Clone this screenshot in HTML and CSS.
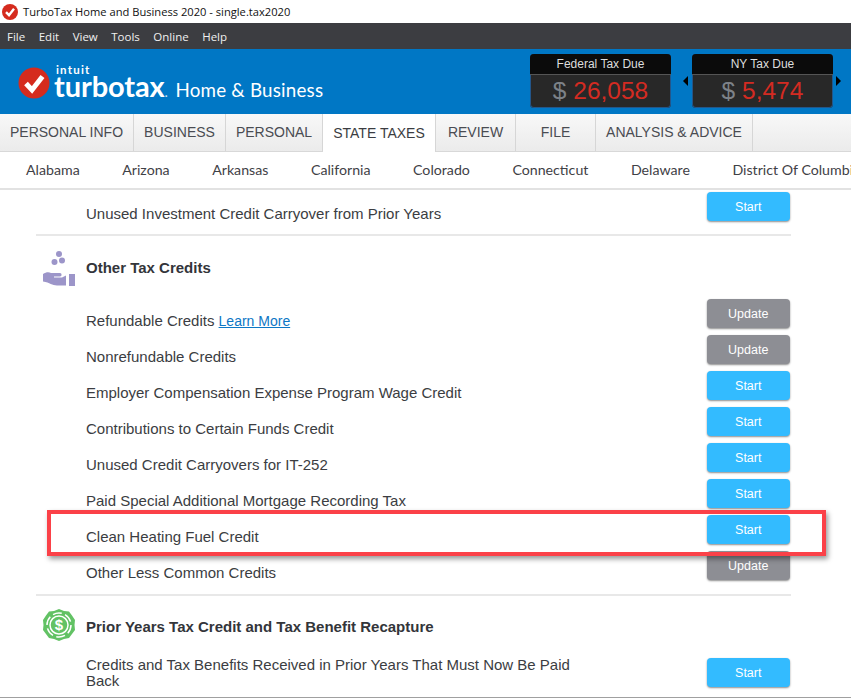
FILE: index.html
```html
<!DOCTYPE html>
<html lang="en">
<head>
<meta charset="utf-8">
<title>TurboTax Home and Business 2020</title>
<link rel="stylesheet" href="styles.css">
</head>
<body>
<div class="titlebar">
  <svg class="app-icon" width="16" height="16" viewBox="0 0 16 16"><circle cx="8" cy="8" r="8" fill="#d52b1e"/><path d="M4 8.200 7 11.200 12 4.800" fill="none" stroke="#fff" stroke-width="2.400"/></svg>
  <span>TurboTax Home and Business 2020 - single.tax2020</span>
</div>
<nav class="menubar"><span>File</span><span>Edit</span><span>View</span><span>Tools</span><span>Online</span><span>Help</span></nav>
<header class="brand">
  <svg class="logo-check" width="32" height="32" viewBox="0 0 32 32"><circle cx="16" cy="16" r="15.500" fill="#d52b1e"/><path d="M8 16.500 14 23 24.500 9.500" fill="none" stroke="#fff" stroke-width="5"/></svg>
  <div class="logo-text">
    <span class="intuit">intuit</span>
    <span class="wordmark"><b>turbotax</b><i>.</i><em>Home &amp; Business</em></span>
  </div>
  <div class="dues">
    <div class="due">
      <div class="due-head">Federal Tax Due</div>
      <div class="due-val"><span class="cur">$</span> <span class="amt">26,058</span></div>
    </div>
    <span class="arrow arrow-l"></span>
    <div class="due">
      <div class="due-head">NY Tax Due</div>
      <div class="due-val"><span class="cur">$</span> <span class="amt">5,474</span></div>
    </div>
    <span class="arrow arrow-r"></span>
  </div>
</header>
<div class="tabs">
  <div class="tab t1">PERSONAL INFO</div>
  <div class="tab t2">BUSINESS</div>
  <div class="tab t3">PERSONAL</div>
  <div class="tab t4 active">STATE TAXES</div>
  <div class="tab t5">REVIEW</div>
  <div class="tab t6">FILE</div>
  <div class="tab t7">ANALYSIS &amp; ADVICE</div>
</div>
<div class="states">
  <span>Alabama</span><span>Arizona</span><span>Arkansas</span><span>California</span><span>Colorado</span><span>Connecticut</span><span>Delaware</span><span>District Of Columbia</span>
</div>
<main class="content">
  <div class="row first"><div class="label">Unused Investment Credit Carryover from Prior Years</div><button class="btn start">Start</button></div>
  <hr class="rule rule-a">
  <div class="sec-head">
    <svg class="sec-icon" width="34" height="36" viewBox="0 0 34 36"><g fill="#9c95c9"><circle cx="17" cy="4" r="3"/><circle cx="12.500" cy="12" r="3"/><circle cx="20" cy="10.500" r="3"/><path d="M1 24c3-2 6-2 8-1h9c2 0 2 3.500 0 3.500h-6v1h8l4-2v10h-9c-5 0-7-3-14-4z"/><rect x="27" y="24" width="6" height="12"/></g></svg>
    <h2>Other Tax Credits</h2>
  </div>
  <div class="row"><div class="label">Refundable Credits <a href="#">Learn More</a></div><button class="btn update">Update</button></div>
  <div class="row"><div class="label">Nonrefundable Credits</div><button class="btn update">Update</button></div>
  <div class="row"><div class="label">Employer Compensation Expense Program Wage Credit</div><button class="btn start">Start</button></div>
  <div class="row"><div class="label">Contributions to Certain Funds Credit</div><button class="btn start">Start</button></div>
  <div class="row"><div class="label">Unused Credit Carryovers for IT-252</div><button class="btn start">Start</button></div>
  <div class="row"><div class="label">Paid Special Additional Mortgage Recording Tax</div><button class="btn start">Start</button></div>
  <div class="row"><div class="label">Clean Heating Fuel Credit</div><button class="btn start">Start</button></div>
  <div class="row"><div class="label">Other Less Common Credits</div><button class="btn update">Update</button></div>
  <hr class="rule rule-b">
  <div class="sec-head sec-two">
    <svg class="sec-icon" width="34" height="34" viewBox="0 0 34 34"><path fill="#62c264" d="M17 1l5 2 5 .500 3 4 3 4.500-.500 5 .500 5-3 4-3 4-5 1-5 2-5-2-5-1-3-4-3-4 .500-5-.500-5 3-4.500 3-4 5-.500z"/><circle cx="17" cy="17" r="12" fill="none" stroke="#fff" stroke-width="1.500" stroke-dasharray="9 3.500"/><circle cx="17" cy="17" r="9" fill="#62c264" stroke="#fff" stroke-width="1.500"/><text x="17" y="22" text-anchor="middle" class="dollar">$</text></svg>
    <h2>Prior Years Tax Credit and Tax Benefit Recapture</h2>
  </div>
  <div class="row last"><div class="label wrap">Credits and Tax Benefits Received in Prior Years That Must Now Be Paid Back</div><button class="btn start">Start</button></div>
</main>
<div class="highlight"></div>
</body>
</html>
```
FILE: styles.css
```css
* { box-sizing: border-box; }
html, body { margin: 0; padding: 0; }
body {
  width: 851px; height: 698px; overflow: hidden; position: relative;
  background: #fff; color: #3b3d42;
  font-family: "Liberation Sans", Arial, sans-serif;
  border-bottom: 1px solid #a0a0a0;
}
.titlebar {
  height: 23px; display: flex; align-items: center; gap: 5px; padding-left: 2px;
  font: 11.150px "Open Sans", sans-serif; color: #111; background: #fff;
}
.app-icon { flex: none; }
.menubar {
  height: 26px; background: #3c3d41; color: #f0f0f0; display: flex; align-items: center;
  gap: 13.500px; padding-left: 7px; font: 11.500px "Open Sans", sans-serif;
}
.brand {
  height: 65px; background: #0077c5; display: flex; align-items: flex-start; position: relative;
}
.logo-check { margin: 18px 0 0 18px; flex: none; }
.logo-text { display: flex; flex-direction: column; margin-left: 4px; color: #fff; }
.intuit { font: 700 11.500px/10px Lato, sans-serif; letter-spacing: 1.200px; margin: 16px 0 0 2px; height: 10px; }
.wordmark { display: flex; align-items: baseline; line-height: 22px; margin-top: 0; }
.wordmark b { font: 700 29px/22px Lato, sans-serif; letter-spacing: -.1px; }
.wordmark i { font: 700 12px/22px Lato, sans-serif; color: #cfe4f4; margin-right: 8px; }
.wordmark em { font: 400 18.800px/22px Lato, sans-serif; font-style: normal; letter-spacing: .2px; }
.dues { margin-left: auto; display: flex; align-items: center; margin-top: 5px; }
.due {
  width: 141px; height: 54px; border-radius: 4px; background: #282828; overflow: hidden;
  box-shadow: 0 0 0 1px #23568a inset;
}
.due-head {
  height: 21px; background: #0b0b0b; color: #ddd; text-align: center;
  font-size: 12px; line-height: 21px; border-bottom: 1px solid #555;
}
.due-val { text-align: center; font-size: 24.500px; line-height: 32px; }
.cur { color: #7d8288; }
.amt { color: #d32b22; }
.arrow { width: 0; height: 0; border-top: 5px solid transparent; border-bottom: 5px solid transparent; }
.arrow-l { border-right: 5px solid #000; margin: 0 4px 0 12px; }
.arrow-r { border-left: 5px solid #000; margin: 0 10px 0 3px; }
.tabs {
  height: 38px; display: flex;
  background: linear-gradient(#f8f8f8, #ebebeb);
  border-bottom: 1px solid #d8d8d8;
  font-size: 14px; color: #4a4c52;
}
.tab { text-align: center; line-height: 36px; border-right: 1px solid #d6d6d6; flex: none; }
.t1 { width: 134px; } .t2 { width: 92px; } .t3 { width: 97px; }
.t4 { width: 113px; background: #fff; margin-bottom: -1px; line-height: 38px; color: #3b3d42; }
.t5 { width: 80px; } .t6 { width: 80px; } .t7 { width: 157px; }
.states {
  height: 38px; display: flex; gap: 42.500px; padding: 0 0 2px 26px; align-items: center; white-space: nowrap;
  font: 14.200px Lato, sans-serif; color: #3f4146; border-bottom: 2px solid #e2e2e2; overflow: hidden;
}
.content { width: 791px; padding: 2px 0 0 36px; }
.row { display: flex; justify-content: space-between; height: 29px; margin-bottom: 7px; padding: 0 1px 0 50px; }
.label { font-size: 15px; line-height: 17px; padding-top: 13px; white-space: nowrap; }
.label a { color: #0d77c5; font-size: 14px; }
.label.wrap { width: 500px; white-space: normal; padding-top: 0; margin-top: -1px; line-height: 16px; }
.btn {
  width: 83.500px; height: 29px; border: 0; border-radius: 4px; color: #fff; padding: 0;
  font: 12.500px "Liberation Sans", Arial, sans-serif; flex: none;
  box-shadow: 0 1px 2px rgba(0,0,0,.45);
}
.start { background: #33bbff; }
.update { background: #8d8e94; }
.rule { border: 0; height: 2px; background: #e8e8e8; margin: 0; }
.rule-a { margin-top: 13px; }
.sec-head { height: 63px; display: flex; align-items: center; position: relative; padding-left: 50px; }
.sec-head h2 { margin: 0; font-size: 15px; font-weight: 700; color: #33353a; }
.sec-icon { position: absolute; left: 6px; }
.sec-head .sec-icon { top: 14px; }
.sec-two { height: 62px; align-items: flex-start; padding-top: 22px; }
.sec-two .sec-icon { top: 12px; }
.dollar { font: 700 15px "Liberation Sans", sans-serif; fill: #fff; }
.rule-b { margin-top: 14px; }
.last { margin: 0; }
.highlight {
  position: absolute; left: 47px; top: 510px; width: 779px; height: 46px;
  border: 4px solid #fb4148; box-shadow: 2px 3px 5px rgba(0,0,0,.4);
}
```
